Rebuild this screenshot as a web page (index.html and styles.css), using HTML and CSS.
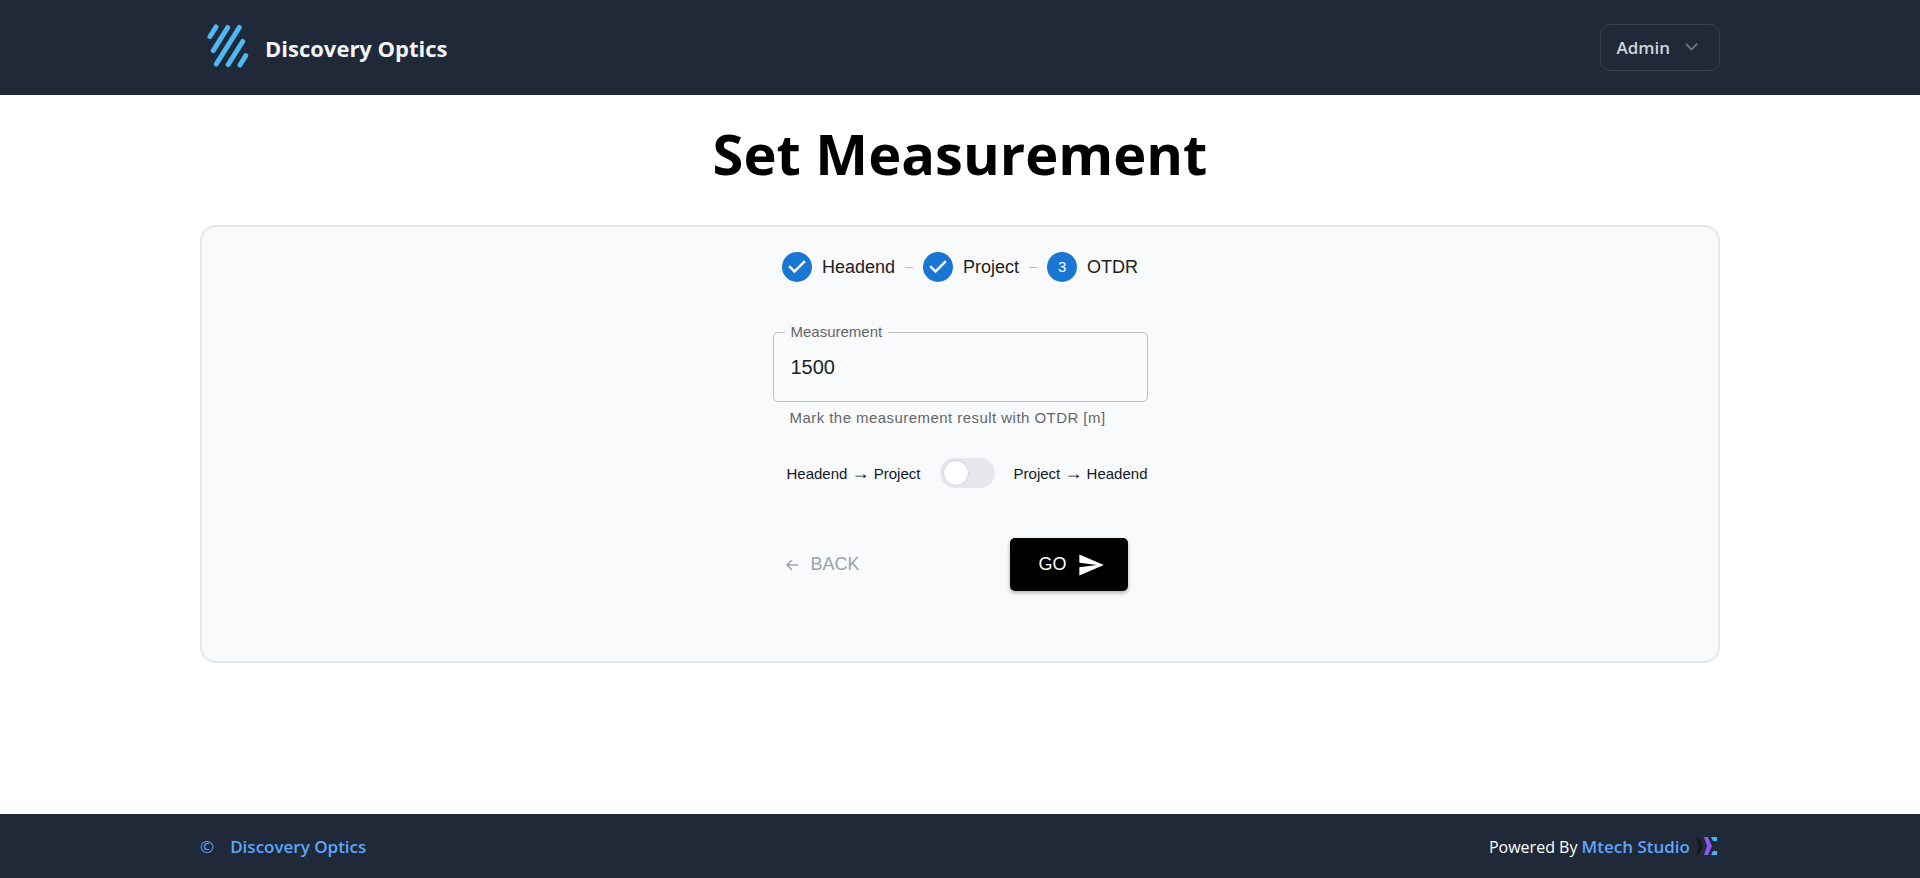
FILE: index.html
```html
<!DOCTYPE html>
<html lang="en">
<head>
<meta charset="utf-8">
<meta name="viewport" content="width=device-width, initial-scale=1">
<title>Discovery Optics</title>
<link rel="stylesheet" href="styles.css">
</head>
<body class="page">
<header class="header">
  <div class="container header-row">
    <a class="brand" href="#">
      <svg class="brand-logo" viewBox="0 0 55 55" aria-hidden="true">
        <path d="M10 16.500L16 7M13.300 30.500L27.700 7.500M16.300 44L39.300 7.500M28.200 44.500L42.700 21.500M40 45L45.700 35.700"/>
      </svg>
      <span>Discovery Optics</span>
    </a>
    <button class="account" type="button" aria-haspopup="menu">
      <span>Admin</span>
      <svg class="account-chevron" viewBox="0 0 16 16" aria-hidden="true"><path d="M2 4l6 6 6-6"/></svg>
    </button>
  </div>
</header>

<main class="container main">
  <h1 class="title">Set Measurement</h1>
  <form class="card">
    <ol class="stepper">
      <li class="step">
        <svg class="step-icon" viewBox="0 0 24 24" aria-hidden="true"><path d="M12 0a12 12 0 1 0 0 24 12 12 0 0 0 0-24zm-2 17l-5-5 1.400-1.400 3.600 3.600 7.600-7.600L19 8l-9 9z"/></svg>
        <span>Headend</span>
      </li>
      <li class="step">
        <svg class="step-icon" viewBox="0 0 24 24" aria-hidden="true"><path d="M12 0a12 12 0 1 0 0 24 12 12 0 0 0 0-24zm-2 17l-5-5 1.400-1.400 3.600 3.600 7.600-7.600L19 8l-9 9z"/></svg>
        <span>Project</span>
      </li>
      <li class="step" aria-current="step">
        <span class="step-number">3</span>
        <span>OTDR</span>
      </li>
    </ol>

    <div class="fields">
      <fieldset class="field">
        <legend class="field-legend"><label for="measurement">Measurement</label></legend>
        <input class="field-input" id="measurement" type="text" inputmode="numeric" value="1500" aria-describedby="measurement-help">
      </fieldset>
      <p class="field-help" id="measurement-help">Mark the measurement result with OTDR [m]</p>

      <div class="direction">
        <label for="direction">Headend <span class="arrow">→</span> Project</label>
        <input class="switch" id="direction" type="checkbox" role="switch">
        <label for="direction">Project <span class="arrow">→</span> Headend</label>
      </div>

      <div class="actions">
        <button class="back" type="button">
          <svg class="back-icon" viewBox="0 0 14 14" aria-hidden="true"><path d="M13 7H2M7 2L2 7l5 5"/></svg>
          <span>BACK</span>
        </button>
        <button class="go" type="submit">
          <span>GO</span>
          <svg class="go-icon" viewBox="0 0 24 24" aria-hidden="true"><path d="M2.010 21L23 12 2.010 3 2 10l15 2-15 2z"/></svg>
        </button>
      </div>
    </div>
  </form>
</main>

<footer class="footer">
  <div class="container footer-row">
    <p class="copyright"><span class="copyright-mark">©</span><a class="footer-link" href="#">Discovery Optics</a></p>
    <p class="powered">
      <span>Powered By <a class="footer-link" href="#">Mtech Studio</a></span>
      <svg class="studio-logo" viewBox="0 0 24 18" aria-hidden="true">
        <path fill="#15181d" d="M0 0h3l4 9-4 9H0l3-9z"/>
        <path fill="#2a2d31" d="M4 0h2l4 9-4 9H4l3-9z"/>
        <path fill="#8f55f7" d="M8 0h4l4 9-4 9H8l3-9z"/>
        <path fill="#42b3f5" d="M15 0h6v4h-4zM15 18h6v-4h-4z"/>
      </svg>
    </p>
  </div>
</footer>
</body>
</html>
```
FILE: styles.css
```css
* { box-sizing: border-box; }

.page {
  display: flex;
  flex-direction: column;
  min-height: 100vh;
  margin: 0;
  background: #fff;
  color: #111827;
  font-family: "Open Sans", "Noto Sans", sans-serif;
}

.container {
  width: 100%;
  max-width: 1560px;
  margin: 0 auto;
  padding: 0 20px;
}

a { color: inherit; text-decoration: none; }
p { margin: 0; }
button { font: inherit; cursor: pointer; }

.header { background: #1f2937; }

.header-row {
  display: flex;
  align-items: center;
  justify-content: space-between;
  padding-top: 20px;
  padding-bottom: 20px;
}

.brand {
  display: flex;
  align-items: center;
  gap: 10px;
  color: #f3f4f6;
  font-size: 22px;
  font-weight: 700;
}

.brand-logo {
  width: 55px;
  height: 55px;
  fill: none;
  stroke: #4fb8f3;
  stroke-width: 5;
  stroke-linecap: round;
}

.account {
  display: flex;
  align-items: center;
  gap: 14px;
  height: 47px;
  padding: 0 20px 0 15px;
  border: 1px solid #374151;
  border-radius: 10px;
  background: transparent;
  color: #d1d5db;
  font-size: 17px;
  font-weight: 600;
}

.account-chevron {
  width: 15px;
  height: 15px;
  fill: none;
  stroke: #6b7280;
  stroke-width: 2;
}

.title {
  margin: 26px 0 40px;
  color: #000;
  font-size: 56px;
  font-weight: 700;
  line-height: 64px;
  text-align: center;
}

.card {
  display: flex;
  flex-direction: column;
  align-items: center;
  margin-bottom: 40px;
  padding: 25px 20px 70px;
  border: 2px solid #e5e7eb;
  border-radius: 16px;
  background: #f9fafc;
  font-family: "Liberation Sans", Arial, sans-serif;
}

.stepper {
  display: flex;
  gap: 10px;
  margin: 0 0 43px;
  padding: 0;
  list-style: none;
  color: #212121;
  font-size: 18px;
  line-height: 28px;
}

.step {
  display: flex;
  align-items: center;
  gap: 10px;
}

.step + .step::before {
  width: 8px;
  height: 1px;
  background: #bdbdbd;
  content: "";
}

.step-icon {
  width: 30px;
  height: 30px;
  fill: #1976d2;
}

.step-number {
  width: 30px;
  border-radius: 50%;
  background: #1976d2;
  color: #fff;
  font-size: 15px;
  line-height: 30px;
  text-align: center;
}

.fields {
  width: 100%;
  max-width: 375px;
}

.field {
  min-width: 0;
  margin: 0;
  padding: 0 12px;
  border: 1px solid #bdbec0;
  border-radius: 5px;
}

.field-legend {
  padding: 0 6px;
  margin-left: -1px;
  color: #666;
  font-size: 15px;
  line-height: 14px;
}

.field-input {
  display: block;
  width: 100%;
  height: 62px;
  padding: 0 5px 6px;
  border: 0;
  outline: 0;
  background: transparent;
  color: #212121;
  font-family: inherit;
  font-size: 20px;
}

.field-help {
  margin: 6px 17px 0;
  color: #666;
  font-size: 15px;
  line-height: 20px;
  letter-spacing: 0.03em;
}

.direction {
  display: flex;
  align-items: center;
  justify-content: space-between;
  margin-top: 30px;
  padding-left: 14px;
  font-size: 15px;
  line-height: 20px;
}

.arrow { font-size: 18px; }

.switch {
  display: flex;
  align-items: center;
  width: 55px;
  height: 30px;
  margin: 0;
  padding: 0 3px;
  border-radius: 15px;
  background: #e5e7eb;
  appearance: none;
  cursor: pointer;
}

.switch::before {
  width: 24px;
  height: 24px;
  border: 1px solid #d1d5db;
  border-radius: 50%;
  background: #fff;
  content: "";
}

.switch:checked { justify-content: flex-end; background: #1976d2; }

.actions {
  display: flex;
  align-items: center;
  justify-content: space-between;
  margin-top: 50px;
  padding: 0 20px 0 12px;
  font-size: 18px;
}

.back {
  display: flex;
  align-items: center;
  gap: 12px;
  padding: 0;
  border: 0;
  background: transparent;
  color: #9ca3af;
}

.back-icon {
  width: 14px;
  height: 14px;
  fill: none;
  stroke: currentColor;
  stroke-width: 1.5;
}

.go {
  display: flex;
  align-items: center;
  gap: 10px;
  height: 53px;
  padding: 0 23px 0 28px;
  border: 0;
  border-radius: 5px;
  background: #000;
  box-shadow: 0 2px 4px rgba(0, 0, 0, 0.3);
  color: #fff;
}

.go-icon {
  width: 28px;
  height: 28px;
  fill: currentColor;
}

.footer {
  margin-top: auto;
  background: #1f2937;
}

.footer-row {
  display: flex;
  align-items: center;
  justify-content: space-between;
  min-height: 64px;
  color: #fff;
  font-size: 16px;
}

.copyright { display: flex; align-items: center; gap: 16px; }
.copyright-mark { color: #60a5fa; font-size: 17px; }
.footer-link { color: #60a5fa; font-size: 17px; font-weight: 600; }
.powered { display: flex; align-items: center; gap: 6px; }
.studio-logo { width: 24px; height: 18px; }
```
